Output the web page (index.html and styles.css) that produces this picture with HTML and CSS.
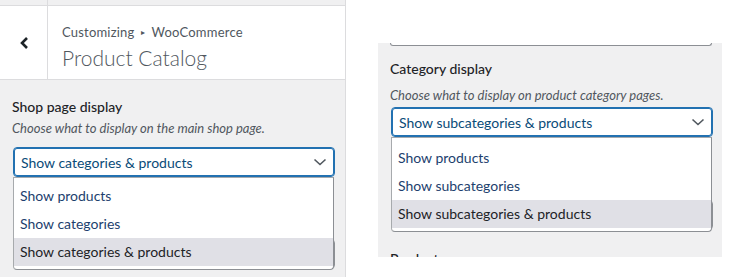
FILE: index.html
```html
<!DOCTYPE html>
<html lang="en">
<head>
  <meta charset="UTF-8">
  <meta name="viewport" content="width=device-width, initial-scale=1.0">
  <title>Product Catalog</title>
  <link rel="stylesheet" href="styles.css">
</head>
<body>
  <div class="page">
    <aside class="pane">
      <div class="peek"><span class="peek-back"></span></div>
      <div class="head">
        <button class="back" aria-label="Back">
          <svg width="10" height="14" viewBox="0 0 10 14"><polyline points="8,2 3,7 8,12" fill="none" stroke="#1d2327" stroke-width="2.6"/></svg>
        </button>
        <div class="titles">
          <span class="crumb">Customizing <span class="sep">&#9656;</span> WooCommerce</span>
          <h3 class="title">Product Catalog</h3>
        </div>
      </div>

      <div class="controls">
        <div class="control">
          <span class="control-title">Shop page display</span>
          <span class="control-desc">Choose what to display on the main shop page.</span>
          <div class="select-wrap">
            <div class="select is-focus">
              <span>Show categories &amp; products</span>
              <svg class="caret" width="14" height="8" viewBox="0 0 14 8"><polyline points="1.5,1.5 7,6.5 12.5,1.5" fill="none" stroke="#50575e" stroke-width="1.6"/></svg>
            </div>
            <ul class="menu">
              <li>Show products</li>
              <li>Show categories</li>
              <li class="is-active">Show categories &amp; products</li>
            </ul>
          </div>
        </div>
        <!-- next control, hidden under the open menu -->
        <div class="control" aria-hidden="true">
          <span class="control-title is-under"></span>
          <span class="control-desc is-under"></span>
          <div class="select-wrap">
            <div class="select"></div>
          </div>
        </div>
      </div>
    </aside>

    <section class="pane pane--crop">
      <div class="prev-edge"></div>
      <div class="controls">
        <div class="control">
          <span class="control-title">Category display</span>
          <span class="control-desc">Choose what to display on product category pages.</span>
          <div class="select-wrap">
            <div class="select is-focus">
              <span>Show subcategories &amp; products</span>
              <svg class="caret" width="14" height="8" viewBox="0 0 14 8"><polyline points="1.5,1.5 7,6.5 12.5,1.5" fill="none" stroke="#50575e" stroke-width="1.6"/></svg>
            </div>
            <ul class="menu">
              <li>Show products</li>
              <li>Show subcategories</li>
              <li class="is-active">Show subcategories &amp; products</li>
            </ul>
          </div>
        </div>
        <div class="control" aria-hidden="true">
          <span class="control-title is-under"></span>
          <span class="control-desc is-under"></span>
          <div class="select-wrap">
            <div class="select"></div>
          </div>
        </div>
        <div class="control">
          <span class="control-title">Products per row</span>
        </div>
      </div>
    </section>
  </div>
</body>
</html>
```

FILE: styles.css
```css
body {
  margin: 0;
  background-color: #FFFFFF;
  font-family: 'Lato', 'Liberation Sans', sans-serif;
  color: #1d2327;
}

.page {
  display: flex;
  align-items: flex-start;
}

.pane {
  width: 345px;
  height: 277px;
  border-right: 1px solid #dcdcde;
  background-color: #f0f0f1;
  overflow: hidden;
  flex-shrink: 0;
}

.peek {
  display: flex;
  height: 5px;
  border-bottom: 1px solid #dcdcde;
}

.peek-back {
  width: 47px;
  border-right: 1px solid #dcdcde;
}

.head {
  display: flex;
  height: 73px;
  background-color: #FFFFFF;
  border-bottom: 1px solid #dcdcde;
}

.back {
  width: 48px;
  border: none;
  border-right: 1px solid #dcdcde;
  background: none;
  padding: 0;
  display: flex;
  align-items: center;
  justify-content: center;
}

.titles {
  padding: 15px 0 0 14px;
  color: #50575e;
}

.crumb {
  display: block;
  font-size: 13px;
  line-height: 22px;
  letter-spacing: 0.2px;
}

.crumb .sep {
  font-size: 8px;
  vertical-align: 2px;
  margin: 0 3px;
}

.title {
  margin: 0;
  font-size: 21px;
  font-weight: 300;
  line-height: 30px;
}

.controls {
  padding: 17px 10px 0 12px;
}

.control {
  margin-bottom: 12px;
}

.control-title {
  display: block;
  font-size: 14px;
  line-height: 20px;
  font-weight: 500;
  color: #1d2327;
  margin-bottom: 2px;
}

.control-desc {
  display: block;
  font-size: 13px;
  line-height: 18px;
  font-style: italic;
  color: #50575e;
  margin-bottom: 10px;
}

.is-under {
  height: 20px;
}

.control-desc.is-under {
  height: 18px;
}

.select-wrap {
  position: relative;
  margin-left: 1px;
  width: 322px;
}

.select {
  box-sizing: border-box;
  height: 30px;
  border: 1px solid #8c8f94;
  border-radius: 4px;
  background-color: #FFFFFF;
  padding: 0 7px 0 7px;
  display: flex;
  align-items: center;
  justify-content: space-between;
  font-size: 14px;
  color: #2c3338;
}

.select.is-focus {
  border-color: #2271b1;
  box-shadow: inset 0 0 0 1px #2271b1;
  color: #0a4b78;
}

.menu {
  position: absolute;
  top: 100%;
  left: 0;
  z-index: 2;
  box-sizing: border-box;
  width: 321px;
  margin: 0;
  padding: 4px 0 3px;
  list-style: none;
  background-color: #FFFFFF;
  border: 1px solid #a7aaad;
  border-right-color: #8c8f94;
  border-bottom-color: #8c8f94;
  border-radius: 0 0 4px 4px;
}

.menu li {
  height: 28px;
  line-height: 28px;
  padding-left: 6px;
  font-size: 14px;
  color: #1d3f6e;
}

.menu li.is-active {
  background-color: #e0e0e6;
  color: #1d2327;
}

.pane--crop {
  width: 344px;
  height: 214px;
  margin: 43px 0 0 32px;
  border-right: none;
}

.prev-edge {
  margin: 0 10px 0 12px;
  width: 320px;
  height: 2px;
  border: 1px solid #8c8f94;
  border-top: none;
  border-radius: 0 0 4px 4px;
  background-color: #FFFFFF;
}

.pane--crop .controls {
  padding-top: 13px;
}

.pane--crop .control {
  margin-bottom: 15px;
}

.pane--crop .control:nth-child(2) {
  margin-bottom: 19px;
}

.pane--crop .control-title {
  margin-bottom: 7px;
}

.pane--crop .control-desc {
  margin-bottom: 3px;
}

.pane--crop .menu {
  padding-top: 6px;
}
```
